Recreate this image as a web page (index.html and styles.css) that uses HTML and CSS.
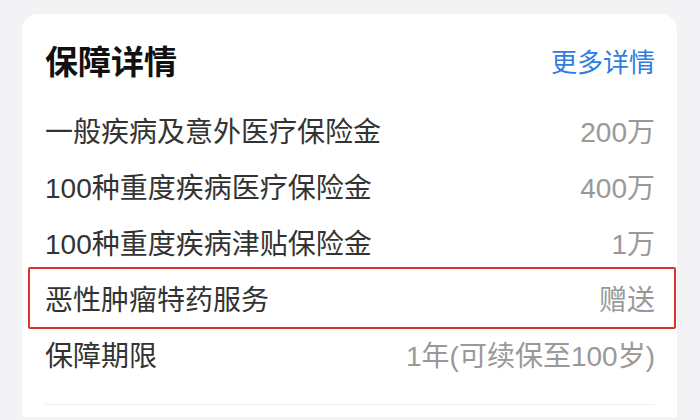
FILE: index.html
```
<!DOCTYPE html>
<html lang="zh-CN">
<head>
<meta charset="utf-8">
<link rel="stylesheet" href="styles.css">
</head>
<body>
<div class="card">
  <div class="header">
    <span class="title">保障详情</span>
    <span class="more">更多详情</span>
  </div>
  <div class="list">
    <div class="row"><span class="label">一般疾病及意外医疗保险金</span><span class="value">200万</span></div>
    <div class="row"><span class="label">100种重度疾病医疗保险金</span><span class="value">400万</span></div>
    <div class="row"><span class="label">100种重度疾病津贴保险金</span><span class="value">1万</span></div>
    <div class="row highlight"><span class="label">恶性肿瘤特药服务</span><span class="value">赠送</span></div>
    <div class="row"><span class="label">保障期限</span><span class="value">1年(可续保至100岁)</span></div>
  </div>
  <div class="divider"></div>
</div>
</body>
</html>
```
FILE: styles.css
```
html, body {
  margin: 0;
  padding: 0;
  background: #f3f3f5;
  font-family: "Liberation Sans", "Noto Sans CJK SC", sans-serif;
}
body {
  box-sizing: border-box;
  height: 420px;
  overflow: hidden;
  padding-top: 14px;
}
.card {
  margin: 0 23px 0 22px;
  background: #fff;
  border-radius: 16px 16px 0 0;
  padding: 14px 22px 12px 23px;
}
.header {
  display: flex;
  justify-content: space-between;
  align-items: center;
  height: 64px;
}
.title {
  font-family: "Noto Sans CJK SC", sans-serif;
  font-size: 33px;
  font-weight: 700;
  color: #111;
}
.more {
  font-family: "Noto Sans CJK SC", sans-serif;
  font-size: 26px;
  color: #2f7de1;
}
.list {
  padding-top: 10px;
}
.row {
  position: relative;
  display: flex;
  justify-content: space-between;
  align-items: center;
  height: 56px;
}
.label {
  font-size: 28px;
  color: #333;
}
.value {
  font-size: 28px;
  color: #999;
}
.highlight::after {
  content: "";
  position: absolute;
  top: -3px;
  bottom: -3px;
  left: -17px;
  right: -21px;
  border: 2px solid #d8332d;
  border-radius: 2px;
}
.divider {
  margin-top: 22px;
  border-top: 1px solid #eeeeee;
}
```
